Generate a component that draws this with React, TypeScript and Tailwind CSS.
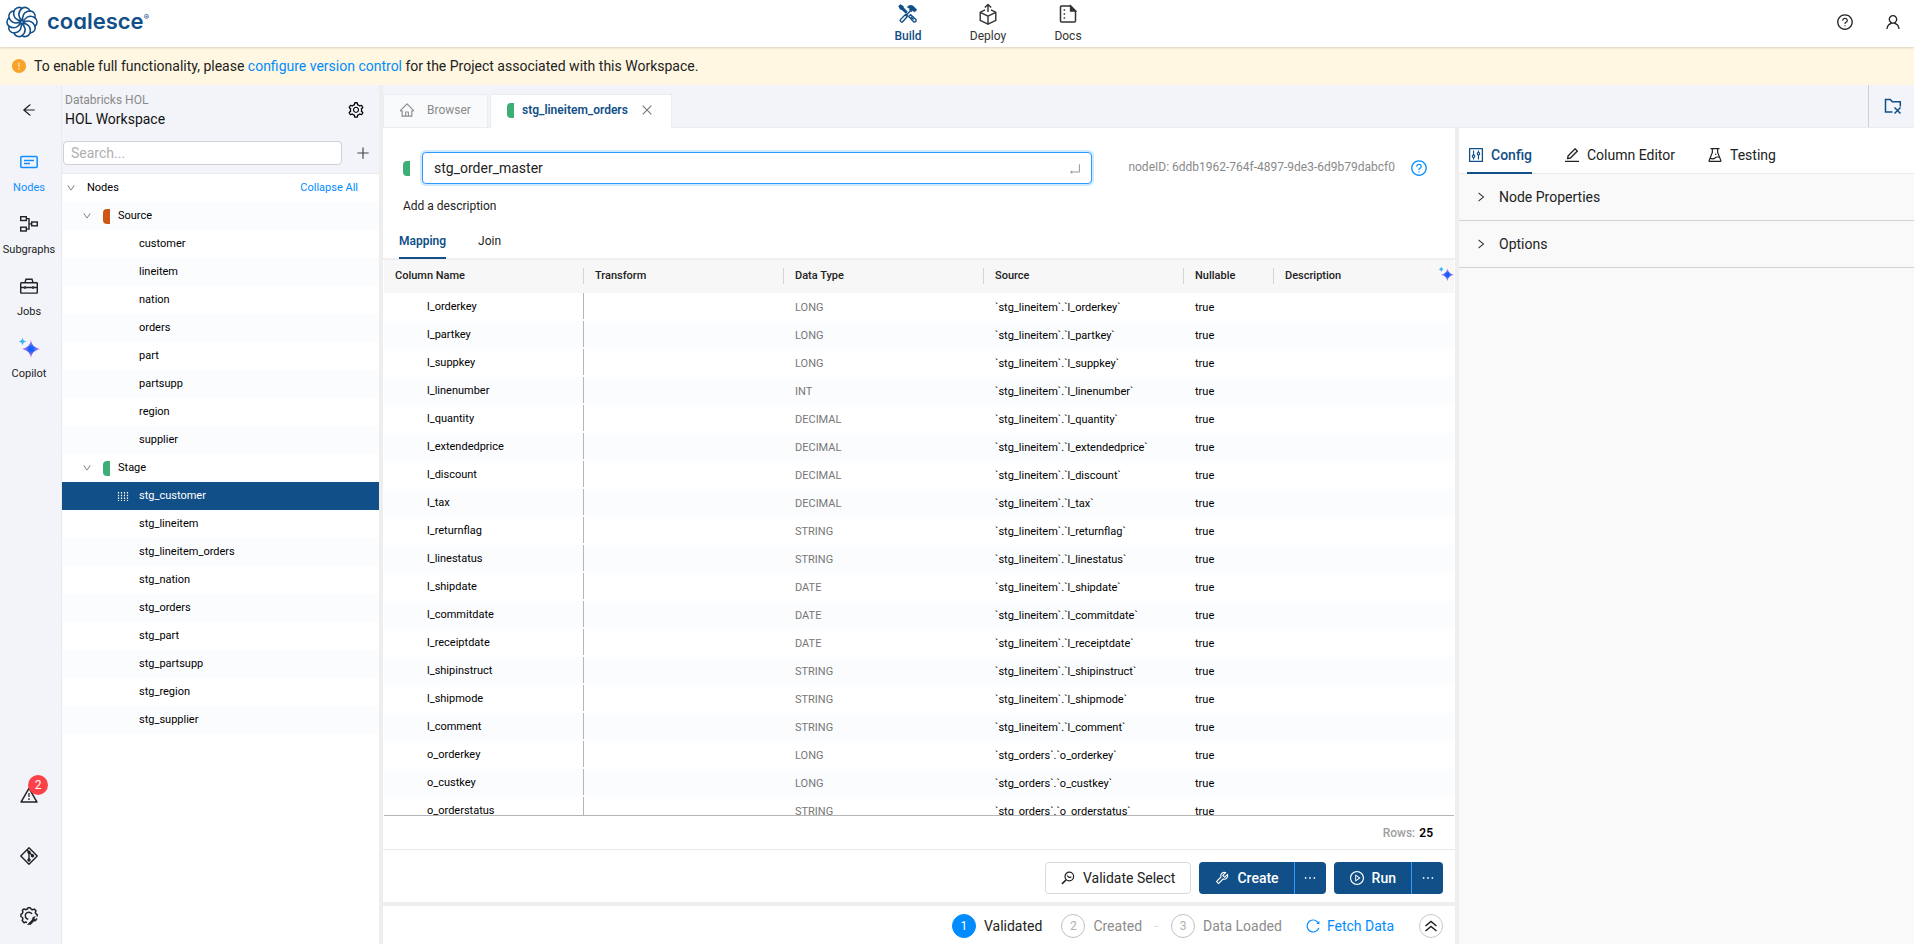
import React from "react";
import {
  AiFillExclamationCircle,
  AiOutlineArrowLeft,
  AiOutlineClose,
  AiOutlineControl,
  AiOutlineDown,
  AiOutlineEdit,
  AiOutlineEllipsis,
  AiOutlineEnter,
  AiOutlineExperiment,
  AiOutlineHome,
  AiOutlinePlayCircle,
  AiOutlinePlus,
  AiOutlineQuestionCircle,
  AiOutlineReload,
  AiOutlineRight,
  AiOutlineSetting,
  AiOutlineTool,
  AiOutlineUser,
  AiOutlineWarning,
} from "react-icons/ai";

const sources = ["customer", "lineitem", "nation", "orders", "part", "partsupp", "region", "supplier"];
const stages = [
  "stg_customer",
  "stg_lineitem",
  "stg_lineitem_orders",
  "stg_nation",
  "stg_orders",
  "stg_part",
  "stg_partsupp",
  "stg_region",
  "stg_supplier",
];

const columns: [string, string, string][] = [
  ["l_orderkey", "LONG", "stg_lineitem"],
  ["l_partkey", "LONG", "stg_lineitem"],
  ["l_suppkey", "LONG", "stg_lineitem"],
  ["l_linenumber", "INT", "stg_lineitem"],
  ["l_quantity", "DECIMAL", "stg_lineitem"],
  ["l_extendedprice", "DECIMAL", "stg_lineitem"],
  ["l_discount", "DECIMAL", "stg_lineitem"],
  ["l_tax", "DECIMAL", "stg_lineitem"],
  ["l_returnflag", "STRING", "stg_lineitem"],
  ["l_linestatus", "STRING", "stg_lineitem"],
  ["l_shipdate", "DATE", "stg_lineitem"],
  ["l_commitdate", "DATE", "stg_lineitem"],
  ["l_receiptdate", "DATE", "stg_lineitem"],
  ["l_shipinstruct", "STRING", "stg_lineitem"],
  ["l_shipmode", "STRING", "stg_lineitem"],
  ["l_comment", "STRING", "stg_lineitem"],
  ["o_orderkey", "LONG", "stg_orders"],
  ["o_custkey", "LONG", "stg_orders"],
  ["o_orderstatus", "STRING", "stg_orders"],
];

function LogoMark() {
  const blades = Array.from({ length: 10 }, (_, i) => i * 36);
  return (
    <svg viewBox="-16 -16 32 32" className="size-8 text-[#114f88]" fill="none" stroke="currentColor" strokeWidth="1.6" strokeLinecap="round" strokeLinejoin="round">
      {blades.map((a) => (
        <path key={a} transform={`rotate(${a})`} d="M0.3 -1.5 C-3.4 -4 -5 -9.500 0 -13.600 A5.200 5.200 0 0 1 8 -11" />
      ))}
    </svg>
  );
}

function BuildIcon() {
  return (
    <svg viewBox="0 0 20 20" className="size-5" fill="none" stroke="currentColor" strokeWidth="1.4">
      <path d="M1.2 2.3 2.4 1.1 4.8 2.4 5.2 4 8.8 7.8 7.8 8.8 4 5.2 2.5 4.8z" fill="currentColor" />
      <path d="M9.3 3.2C11 1 13.5.8 15.6 2.4L18.8 5.8 16.6 8 14.8 6.6 13.4 7.8 11.4 5.8 12 4.6z" fill="currentColor" strokeWidth=".6" />
      <path d="M12.5 6.8 8 11.4M8 9.8 10 11.8" />
      <path d="m7.2 10.8 2 2-4.6 5c-1 1-3.200-.8-2.200-2.200z" />
      <path d="m10.800 12.600 1.800-1.800 5 4.400c1.600 1.600-.6 3.800-2.200 2.200z" />
      <path d="m12.800 12.800 2.800 2.600" />
    </svg>
  );
}

function DeployIcon() {
  return (
    <svg viewBox="0 0 20 22" className="h-[22px] w-5" fill="none" stroke="currentColor" strokeWidth="1.4" strokeLinejoin="round">
      <path d="M7 6.800 2.200 9.400v8L10 21.200l7.800-3.800v-8L13 6.800" />
      <path d="m2.200 9.400 7.800 3.800 7.800-3.800M10 13.200v8M10 9V1.600M6.800 4.600 10 1.400l3.200 3.200" />
    </svg>
  );
}

function DocsIcon() {
  return (
    <svg viewBox="0 0 20 20" className="size-5" fill="none" stroke="currentColor" strokeWidth="1.500">
      <path d="M12.600 2H3.500a1 1 0 0 0-1 1v14a1 1 0 0 0 1 1h13a1 1 0 0 0 1-1V7z" />
      <path d="M12.600 2v5h4.900z" fill="currentColor" />
      <path d="M5.600 6h1.500M5.600 10h1.500M5.600 14h1.500" />
    </svg>
  );
}

function NodesIcon() {
  return (
    <svg viewBox="0 0 18 14" className="h-3.5 w-[18px]" fill="none" stroke="currentColor" strokeWidth="1.500">
      <rect x="0.800" y="1.500" width="16.400" height="11" rx="1" />
      <path d="M4 5.500h10M4 8.500h6" />
    </svg>
  );
}

function SubgraphsIcon() {
  return (
    <svg viewBox="0 0 18 18" className="size-[18px]" fill="none" stroke="currentColor" strokeWidth="1.400">
      <rect x="0.700" y="1.700" width="5.600" height="3.800" />
      <rect x="0.700" y="12.200" width="5.600" height="3.800" />
      <rect x="11.700" y="7" width="5.600" height="3.800" />
      <path d="M6.300 3.600H9v10.500H6.300M9 8.900h2.700" />
    </svg>
  );
}

function JobsIcon() {
  return (
    <svg viewBox="0 0 18 16" className="h-4 w-[18px]" fill="none" stroke="currentColor" strokeWidth="1.400">
      <path d="M5 4.500 6 1.200h6l1 3.300" />
      <rect x="0.700" y="4.700" width="16.600" height="10.400" rx=".6" />
      <path d="M.7 9.500h3.500M5.800 9.500h6.400M13.800 9.500h3.500M5 8v3M13 8v3" />
    </svg>
  );
}

function SparkleIcon({ className }: { className: string }) {
  const id = React.useId();
  return (
    <svg viewBox="0 0 22 22" className={className}>
      <defs>
        <radialGradient id={id}>
          <stop offset="0.250" stopColor="#1560fb" />
          <stop offset="0.800" stopColor="#c77be6" />
        </radialGradient>
      </defs>
      <path d="M13 3c1.300 5.600 2.900 7.200 9 9-6.100 1.800-7.700 3.400-9 9-1.300-5.600-2.900-7.200-9-9 6.100-1.800 7.700-3.400 9-9z" fill={`url(#${id})`} />
      <path d="M4.500.5c.6 2.700 1.300 3.400 4 4-2.700.6-3.400 1.300-4 4-.6-2.700-1.300-3.400-4-4 2.700-.6 3.400-1.300 4-4z" fill="#3cb4f4" />
    </svg>
  );
}

function GitIcon() {
  return (
    <svg viewBox="0 0 18 18" className="size-[18px]" fill="none" stroke="currentColor" strokeWidth="1.400" strokeLinejoin="round">
      <path d="m9 .8 8.200 8.200L9 17.200.8 9z" />
      <path d="M7 2.800 9 5v8.500M9 5l4 4.200" />
      <circle cx="9" cy="5.200" r="1" fill="currentColor" />
      <circle cx="9" cy="13" r="1" fill="currentColor" />
      <circle cx="12.500" cy="8.800" r="1" fill="currentColor" />
    </svg>
  );
}

function GearToolIcon() {
  return (
    <svg viewBox="0 0 18 18" className="size-[18px]" fill="none" stroke="currentColor" strokeWidth="1.500" strokeLinejoin="round">
      <path d="M7 15.700 6 15 4 15.700 2.200 13.500 2.900 11.700 2.400 10.500.9 9.500V7.300l1.500-1L2.900 5 2.300 3.300 4 1.900l2 .8L7.300 2 8 .8h2.300L11.200 2.200l1.300.6 1.800-.7 1.700 1.700-.7 1.700.5 1.200 1.400.9v1.900" />
      <path d="M12 7A3.600 3.600 0 1 0 8.300 12.300" />
      <path d="m7.500 17.500 4.800-4.800c-.2-2 1-3.200 3-3l-1.300 1.600 1.200 1.200 1.800-1.200c0 2.200-1.500 3.200-3.200 2.800l-2.900 3.400z" fill="currentColor" strokeWidth=".6" />
    </svg>
  );
}

function FolderCloseIcon() {
  return (
    <svg viewBox="0 0 18 17" className="h-[17px] w-[18px]" fill="none" stroke="currentColor" strokeWidth="1.500">
      <path d="M8.500 14H1.500V1.500h4.800l2 2.300h8V8.500" />
      <path d="m10.500 9.500 6 6M16.500 9.500l-6 6" />
    </svg>
  );
}

function ValidateIcon() {
  return (
    <svg viewBox="0 0 14 14" className="size-3.5" fill="none" stroke="currentColor" strokeWidth="1.200">
      <circle cx="8.300" cy="5.500" r="4.300" />
      <path d="M5.200 8.700 1 12.900" strokeWidth="1.600" />
      <path d="m6 4.600 2 1.800 2.400-.2" />
    </svg>
  );
}

function ChevronsUpIcon() {
  return (
    <svg viewBox="0 0 14 12" className="h-3 w-3.5" fill="none" stroke="currentColor" strokeWidth="1.500">
      <path d="m1.500 6 5.500-4.500L12.500 6M1.500 11 7 6.500l5.500 4.500" />
    </svg>
  );
}

function DragIcon() {
  return (
    <svg viewBox="0 0 12 10" className="h-2.5 w-3" stroke="currentColor" strokeWidth="1.200" strokeDasharray="1.500 1.200">
      <path d="M1.500 1v9M4.500 1v9M7.500 1v9M10.500 1v9" />
    </svg>
  );
}

function TopLink({ icon, label, active }: { icon: React.ReactNode; label: string; active?: boolean }) {
  return (
    <a href="#" className={`flex w-20 flex-col items-center text-xs leading-4 ${active ? "font-medium text-[#114f88]" : "text-[#333]"}`}>
      <span className="flex h-6 items-center">{icon}</span>
      <span className="pt-0.5">{label}</span>
    </a>
  );
}

function RailLink({ icon, label, active }: { icon: React.ReactNode; label: string; active?: boolean }) {
  return (
    <a href="#" className={`flex h-[62px] flex-col items-center gap-1 text-[11px] leading-4 ${active ? "text-[#108eff]" : "text-[#222]"}`}>
      <span className="flex h-7 items-center">{icon}</span>
      {label}
    </a>
  );
}

function TreeGroup({ label, color }: { label: string; color: string }) {
  return (
    <li className="flex h-7 items-center pl-5 odd:bg-white even:bg-[#fbfcfe]">
      <button type="button" className="flex items-center">
        <AiOutlineDown className="size-2.5 text-[#666]" />
        <span className={`ml-[11px] h-[15px] w-[7px] rounded-l ${color}`} />
        <span className="ml-2">{label}</span>
      </button>
    </li>
  );
}

function TreeItem({ label, selected }: { label: string; selected?: boolean }) {
  return (
    <li className={`flex h-7 items-center ${selected ? "bg-[#114f88] text-white" : "odd:bg-white even:bg-[#fbfcfe]"}`}>
      <span className="flex w-[77px] justify-end pr-2.5">{selected && <DragIcon />}</span>
      <a href="#">{label}</a>
    </li>
  );
}

function ConfigTab({ icon, label, active }: { icon: React.ReactNode; label: string; active?: boolean }) {
  return (
    <button
      type="button"
      className={`-mb-px flex h-9 items-center gap-1.5 border-b-2 text-sm ${active ? "border-[#114f88] font-medium text-[#114f88]" : "border-transparent text-[#222]"}`}
    >
      {icon}
      {label}
    </button>
  );
}

function ConfigSection({ label }: { label: string }) {
  return (
    <button type="button" className="flex h-[47px] w-full items-center gap-3 border-b border-[#d3d3d3] px-4 text-sm text-[#222]">
      <AiOutlineRight className="size-3" />
      {label}
    </button>
  );
}

function SplitButton({ icon, label }: { icon: React.ReactNode; label: string }) {
  return (
    <div className="flex h-8 overflow-hidden rounded-sm bg-[#114f88] text-sm font-medium text-white">
      <button type="button" className="flex items-center gap-[7px] px-[15px]">
        {icon}
        {label}
      </button>
      <button type="button" aria-label={`${label} options`} className="flex w-8 items-center justify-center border-l border-[#2f9bff]">
        <AiOutlineEllipsis className="size-4" />
      </button>
    </div>
  );
}

function Step({ n, label, active }: { n: number; label: string; active?: boolean }) {
  return (
    <li className={`flex items-center gap-2 text-sm ${active ? "text-[#222]" : "text-[#8c8c8c]"}`}>
      <span
        className={`flex size-6 items-center justify-center rounded-full border text-xs ${active ? "border-[#008cff] bg-[#008cff] text-white" : "border-[#bfbfbf] text-[#b0b0b0]"}`}
      >
        {n}
      </span>
      {label}
    </li>
  );
}

export default function App() {
  return (
    <div className="flex h-screen flex-col overflow-hidden bg-white font-[Roboto,sans-serif] text-xs text-black">
      <header className="relative grid h-[47px] shrink-0 grid-cols-[1fr_auto_1fr] items-center shadow-[0_1px_2px_rgba(0,0,0,0.15)]">
        <a href="#" className="flex items-center gap-[9px] pb-[3px] pl-1.5" aria-label="coalesce home">
          <LogoMark />
          <span className="flex items-start pb-0.5 font-[Inter,sans-serif] text-[22px] leading-7 font-semibold text-[#114f88] [font-feature-settings:'cv11']">
            coalesce<span className="pt-1 text-[8px] leading-3">®</span>
          </span>
        </a>
        <nav className="flex pb-0.5 pl-[62px]">
          <TopLink active icon={<BuildIcon />} label="Build" />
          <TopLink icon={<DeployIcon />} label="Deploy" />
          <TopLink icon={<DocsIcon />} label="Docs" />
        </nav>
        <div className="flex justify-end gap-[30px] pr-3 pb-[3px] text-[#222]">
          <button type="button" aria-label="Help"><AiOutlineQuestionCircle className="size-[18px]" /></button>
          <button type="button" aria-label="Account"><AiOutlineUser className="size-[18px]" /></button>
        </div>
      </header>

      <div className="flex h-[38px] shrink-0 items-center gap-[7px] bg-[#fff7e1] px-[11px] text-sm text-[#222]">
        <AiFillExclamationCircle className="size-4 text-[#faa32b]" />
        <p>
          To enable full functionality, please <a href="#" className="text-[#008cff]">configure version control</a> for the Project associated with this Workspace.
        </p>
      </div>

      <div className="flex min-h-0 flex-1">
        <nav className="flex w-[62px] shrink-0 flex-col border-r border-[#e9eaee] bg-[#f3f4f9] pr-[3px] text-[#222]">
          <button type="button" aria-label="Back" className="flex h-[50px] items-center justify-center">
            <AiOutlineArrowLeft className="size-4" />
          </button>
          <div className="mt-[13px]">
            <RailLink active icon={<NodesIcon />} label="Nodes" />
            <RailLink icon={<SubgraphsIcon />} label="Subgraphs" />
            <RailLink icon={<JobsIcon />} label="Jobs" />
            <RailLink icon={<SparkleIcon className="size-[22px]" />} label="Copilot" />
          </div>
          <div className="mt-auto flex flex-col items-center gap-[42px] pb-[19px]">
            <button type="button" aria-label="Problems" className="relative">
              <AiOutlineWarning className="size-5" />
              <span className="absolute -top-2.5 left-[9px] flex size-5 items-center justify-center rounded-full bg-[#fc4149] text-xs text-white">2</span>
            </button>
            <button type="button" aria-label="Git"><GitIcon /></button>
            <button type="button" aria-label="Build settings"><GearToolIcon /></button>
          </div>
        </nav>

        <aside className="flex w-[317px] shrink-0 flex-col bg-[#f3f4f9]">
          <div className="flex items-center justify-between pt-1.5 pr-3.5 pl-[3px]">
            <div>
              <p className="text-xs leading-[18px] text-[#8a8a8a]">Databricks HOL</p>
              <h1 className="text-sm leading-5 text-[#111]">HOL Workspace</h1>
            </div>
            <button type="button" aria-label="Workspace settings"><AiOutlineSetting className="size-[18px]" /></button>
          </div>
          <div className="flex items-center gap-[13px] pt-3 pr-2 pb-2 pl-px">
            <input
              aria-label="Search nodes"
              placeholder="Search..."
              className="h-6 min-w-0 flex-1 rounded-sm border border-[#d0d0d0] bg-white px-[7px] text-sm placeholder:text-[#b0b0b0]"
            />
            <button type="button" aria-label="Add node"><AiOutlinePlus className="size-4 text-[#444]" /></button>
          </div>
          <ul className="min-h-0 flex-1 border-t border-[#ececec] bg-white text-[11px]">
            <li className="flex h-7 items-center justify-between pr-[21px] pl-1">
              <button type="button" className="flex items-center gap-[11px]">
                <AiOutlineDown className="size-2.5 text-[#666]" />
                Nodes
              </button>
              <button type="button" className="text-[#008cff]">Collapse All</button>
            </li>
            <TreeGroup label="Source" color="bg-[#ce5617]" />
            {sources.map((s) => <TreeItem key={s} label={s} />)}
            <TreeGroup label="Stage" color="bg-[#3dae76]" />
            {stages.map((s) => <TreeItem key={s} label={s} selected={s === "stg_customer"} />)}
          </ul>
        </aside>

        <div className="w-1 shrink-0 bg-[#eee]" />

        <div className="flex min-w-0 flex-1 flex-col">
          <div className="flex h-[43px] shrink-0 items-end justify-between border-b border-[#ebecef] bg-[#f3f4f9]">
            <div className="-mb-px flex gap-0.5">
              <button type="button" className="flex h-[34px] w-[105px] items-center gap-3 border border-[#ebecef] bg-[#f9fafc] pb-0.5 pl-[15px] text-xs text-[#8a8a8a]">
                <AiOutlineHome className="size-4" />
                Browser
              </button>
              <div className="flex h-[34px] w-[182px] items-center border border-b-0 border-[#ebecef] bg-white pb-[3px] pl-4">
                <span className="mr-2 h-[15px] w-[7px] rounded-l bg-[#3dae76]" />
                <span className="text-xs font-semibold text-[#114f88]">stg_lineitem_orders</span>
                <button type="button" aria-label="Close tab" className="ml-3"><AiOutlineClose className="size-3.5 text-[#777]" /></button>
              </div>
            </div>
            <button type="button" aria-label="Close panel" className="flex h-[42px] w-[46px] items-center justify-center border-l border-[#cfd0d3] pl-0.5 text-[#114f88]">
              <FolderCloseIcon />
            </button>
          </div>

          <div className="flex min-h-0 flex-1">
            <main className="flex min-w-0 flex-1 flex-col">
              <div className="flex items-center pt-6 pr-[27px] pl-5">
                <span className="h-[15px] w-[7px] rounded-l bg-[#3dae76]" />
                <div className="relative ml-3 flex-1">
                  <input
                    aria-label="Node name"
                    defaultValue="stg_order_master"
                    className="h-8 w-full rounded-sm border border-[#2f9bff] bg-white px-[11px] text-sm text-[#222] shadow-[0_0_0_2px_rgba(16,142,255,0.2)] outline-none"
                  />
                  <AiOutlineEnter className="absolute top-2.5 right-2.5 size-3.5 text-[#999]" />
                </div>
                <span className="ml-9 pb-0.5 text-xs text-[#8a8a8a]">nodeID: 6ddb1962-764f-4897-9de3-6d9b79dabcf0</span>
                <button type="button" aria-label="Node help" className="ml-[15px]"><AiOutlineQuestionCircle className="size-[18px] text-[#008cff]" /></button>
              </div>
              <p className="px-5 pt-3 text-xs leading-5 text-[#222]">Add a description</p>
              <div className="flex shrink-0 gap-8 border-b-2 border-[#eee] pt-2.5 pl-4 text-xs">
                <button type="button" className="-mb-px h-[33px] border-b-2 border-[#114f88] pb-0.5 font-semibold text-[#114f88]">Mapping</button>
                <button type="button" className="-mb-px h-[33px] border-b-2 border-transparent pb-0.5 text-[#222]">Join</button>
              </div>

              <div className="mx-px min-h-0 flex-1 overflow-hidden border-b border-[#b5b5b5]">
                <table className="w-full table-fixed border-collapse text-left text-[11px]">
                  <colgroup>
                    <col className="w-[200px]" />
                    <col className="w-[200px]" />
                    <col className="w-[200px]" />
                    <col className="w-[200px]" />
                    <col className="w-[90px]" />
                    <col />
                  </colgroup>
                  <thead>
                    <tr className="h-[33px] bg-[#f7f7f7] text-[#222]">
                      {["Column Name", "Transform", "Data Type", "Source", "Nullable"].map((h) => (
                        <th key={h} scope="col" className="px-0 pt-0 pb-0.5 font-medium">
                          <div className="border-r border-[#d5d5d5] pl-[11px] leading-4">{h}</div>
                        </th>
                      ))}
                      <th scope="col" className="px-0 pt-0 pb-0.5 font-medium">
                        <div className="flex items-center justify-between pl-[11px] leading-4">
                          Description
                          <button type="button" aria-label="Suggest descriptions" className="pb-1"><SparkleIcon className="size-4" /></button>
                        </div>
                      </th>
                    </tr>
                  </thead>
                  <tbody>
                    {columns.map(([name, type, source]) => (
                      <tr key={name} className="h-7 even:bg-[#fbfcfe]">
                        <td className="p-0 align-top">
                          <div className="h-[26px] border-r border-[#b5b5b5] pl-[43px] leading-7">{name}</div>
                        </td>
                        <td className="p-0" />
                        <td className="pt-0.5 pr-0 pb-0 pl-[11px] text-[#777]">{type}</td>
                        <td className="pt-0.5 pr-0 pb-0 pl-[11px]">{`\`${source}\`.\`${name}\``}</td>
                        <td className="pt-0.5 pr-0 pb-0 pl-[11px]">true</td>
                        <td className="p-0" />
                      </tr>
                    ))}
                  </tbody>
                </table>
              </div>

              <p className="flex h-[34px] shrink-0 items-center justify-end gap-1 border-b border-[#e9e9e9] pr-[22px] text-xs font-medium text-[#a0a0a0]">
                Rows: <span className="font-semibold text-black">25</span>
              </p>
              <div className="flex h-[52px] shrink-0 items-center justify-end gap-2 pt-1 pr-3">
                <button type="button" className="flex h-8 items-center gap-2 rounded-sm border border-[#d9d9d9] px-[15px] text-sm text-[#222]">
                  <ValidateIcon />
                  Validate Select
                </button>
                <SplitButton icon={<AiOutlineTool className="size-4" />} label="Create" />
                <SplitButton icon={<AiOutlinePlayCircle className="size-4" />} label="Run" />
              </div>
              <footer className="flex h-[42px] shrink-0 items-center justify-end border-t-4 border-[#eee] pt-0.5 pr-3">
                <ol className="flex items-center">
                  <Step active n={1} label="Validated" />
                  <li aria-hidden="true" className="w-[19px]" />
                  <Step n={2} label="Created" />
                  <li aria-hidden="true" className="mx-3 h-px w-[5px] bg-[#e0e0e0]" />
                  <Step n={3} label="Data Loaded" />
                </ol>
                <button type="button" className="ml-[23px] flex items-center gap-1.5 text-sm text-[#008cff]">
                  <AiOutlineReload className="size-4" />
                  Fetch Data
                </button>
                <button type="button" aria-label="Expand results" className="ml-[25px] flex size-6 items-center justify-center rounded-full border border-[#c8c8c8] text-[#222]">
                  <ChevronsUpIcon />
                </button>
              </footer>
            </main>

            <div className="w-1 shrink-0 bg-[#eee]" />

            <aside className="w-[455px] shrink-0 bg-[#f9f9f9]">
              <div className="flex gap-[31px] border-b border-[#ebebeb] bg-white pt-2.5 pl-2">
                <ConfigTab active icon={<AiOutlineControl className="size-[18px]" />} label="Config" />
                <ConfigTab icon={<AiOutlineEdit className="size-[18px]" />} label="Column Editor" />
                <ConfigTab icon={<AiOutlineExperiment className="size-[18px]" />} label="Testing" />
              </div>
              <ConfigSection label="Node Properties" />
              <ConfigSection label="Options" />
            </aside>
          </div>
        </div>
      </div>
    </div>
  );
}
